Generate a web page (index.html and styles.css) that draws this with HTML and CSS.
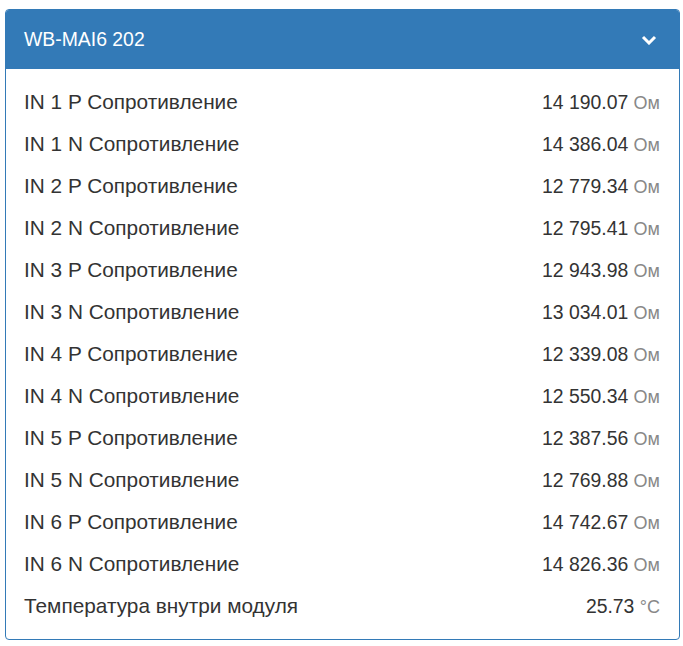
FILE: index.html
```html
<!DOCTYPE html>
<html lang="ru">
<head>
    <meta charset="UTF-8">
    <meta name="viewport" content="width=device-width, initial-scale=1.0">
    <title>WB-MAI6 202</title>
    <link rel="stylesheet" href="styles.css">
</head>
<body>
    <div class="wrap">
        <div class="panel">
            <div class="panel-heading">
                <span class="panel-title">WB-MAI6 202</span>
                <svg class="chevron" width="16" height="10" viewBox="0 0 16 10">
                    <path d="M2 2 L8 8 L14 2" fill="none" stroke="#fff" stroke-width="3"/>
                </svg>
            </div>
            <div class="panel-body">
                <div class="row"><span class="name">IN 1 P Сопротивление</span><span class="value">14 190.07 <span class="unit">Ом</span></span></div>
                <div class="row"><span class="name">IN 1 N Сопротивление</span><span class="value">14 386.04 <span class="unit">Ом</span></span></div>
                <div class="row"><span class="name">IN 2 P Сопротивление</span><span class="value">12 779.34 <span class="unit">Ом</span></span></div>
                <div class="row"><span class="name">IN 2 N Сопротивление</span><span class="value">12 795.41 <span class="unit">Ом</span></span></div>
                <div class="row"><span class="name">IN 3 P Сопротивление</span><span class="value">12 943.98 <span class="unit">Ом</span></span></div>
                <div class="row"><span class="name">IN 3 N Сопротивление</span><span class="value">13 034.01 <span class="unit">Ом</span></span></div>
                <div class="row"><span class="name">IN 4 P Сопротивление</span><span class="value">12 339.08 <span class="unit">Ом</span></span></div>
                <div class="row"><span class="name">IN 4 N Сопротивление</span><span class="value">12 550.34 <span class="unit">Ом</span></span></div>
                <div class="row"><span class="name">IN 5 P Сопротивление</span><span class="value">12 387.56 <span class="unit">Ом</span></span></div>
                <div class="row"><span class="name">IN 5 N Сопротивление</span><span class="value">12 769.88 <span class="unit">Ом</span></span></div>
                <div class="row"><span class="name">IN 6 P Сопротивление</span><span class="value">14 742.67 <span class="unit">Ом</span></span></div>
                <div class="row"><span class="name">IN 6 N Сопротивление</span><span class="value">14 826.36 <span class="unit">Ом</span></span></div>
                <div class="row"><span class="name">Температура внутри модуля</span><span class="value">25.73 <span class="unit">°C</span></span></div>
            </div>
        </div>
    </div>
</body>
</html>
```

FILE: styles.css
```css
body {
    margin: 0;
    font-family: "Liberation Sans", Arial, sans-serif;
    color: #333;
    background: #fff;
}

.wrap {
    padding: 9px 3px 5px 5px;
}

.panel {
    border: 1px solid #337ab7;
    border-radius: 4px;
    background: #fff;
}

.panel-heading {
    background-color: #337ab7;
    color: #fff;
    height: 59px;
    padding: 0 22px 0 18px;
    display: flex;
    align-items: center;
    justify-content: space-between;
    border-radius: 3px 3px 0 0;
}

.panel-title {
    font-size: 19.4px;
}

.chevron {
    display: block;
    margin-top: 1px;
}

.panel-body {
    padding: 12px 19px 12px 18px;
}

.row {
    display: flex;
    justify-content: space-between;
    align-items: center;
    height: 42px;
}

.name {
    font-size: 20.8px;
}

.value {
    font-size: 19.4px;
}

.unit {
    color: #888;
    font-size: 18px;
}
```
